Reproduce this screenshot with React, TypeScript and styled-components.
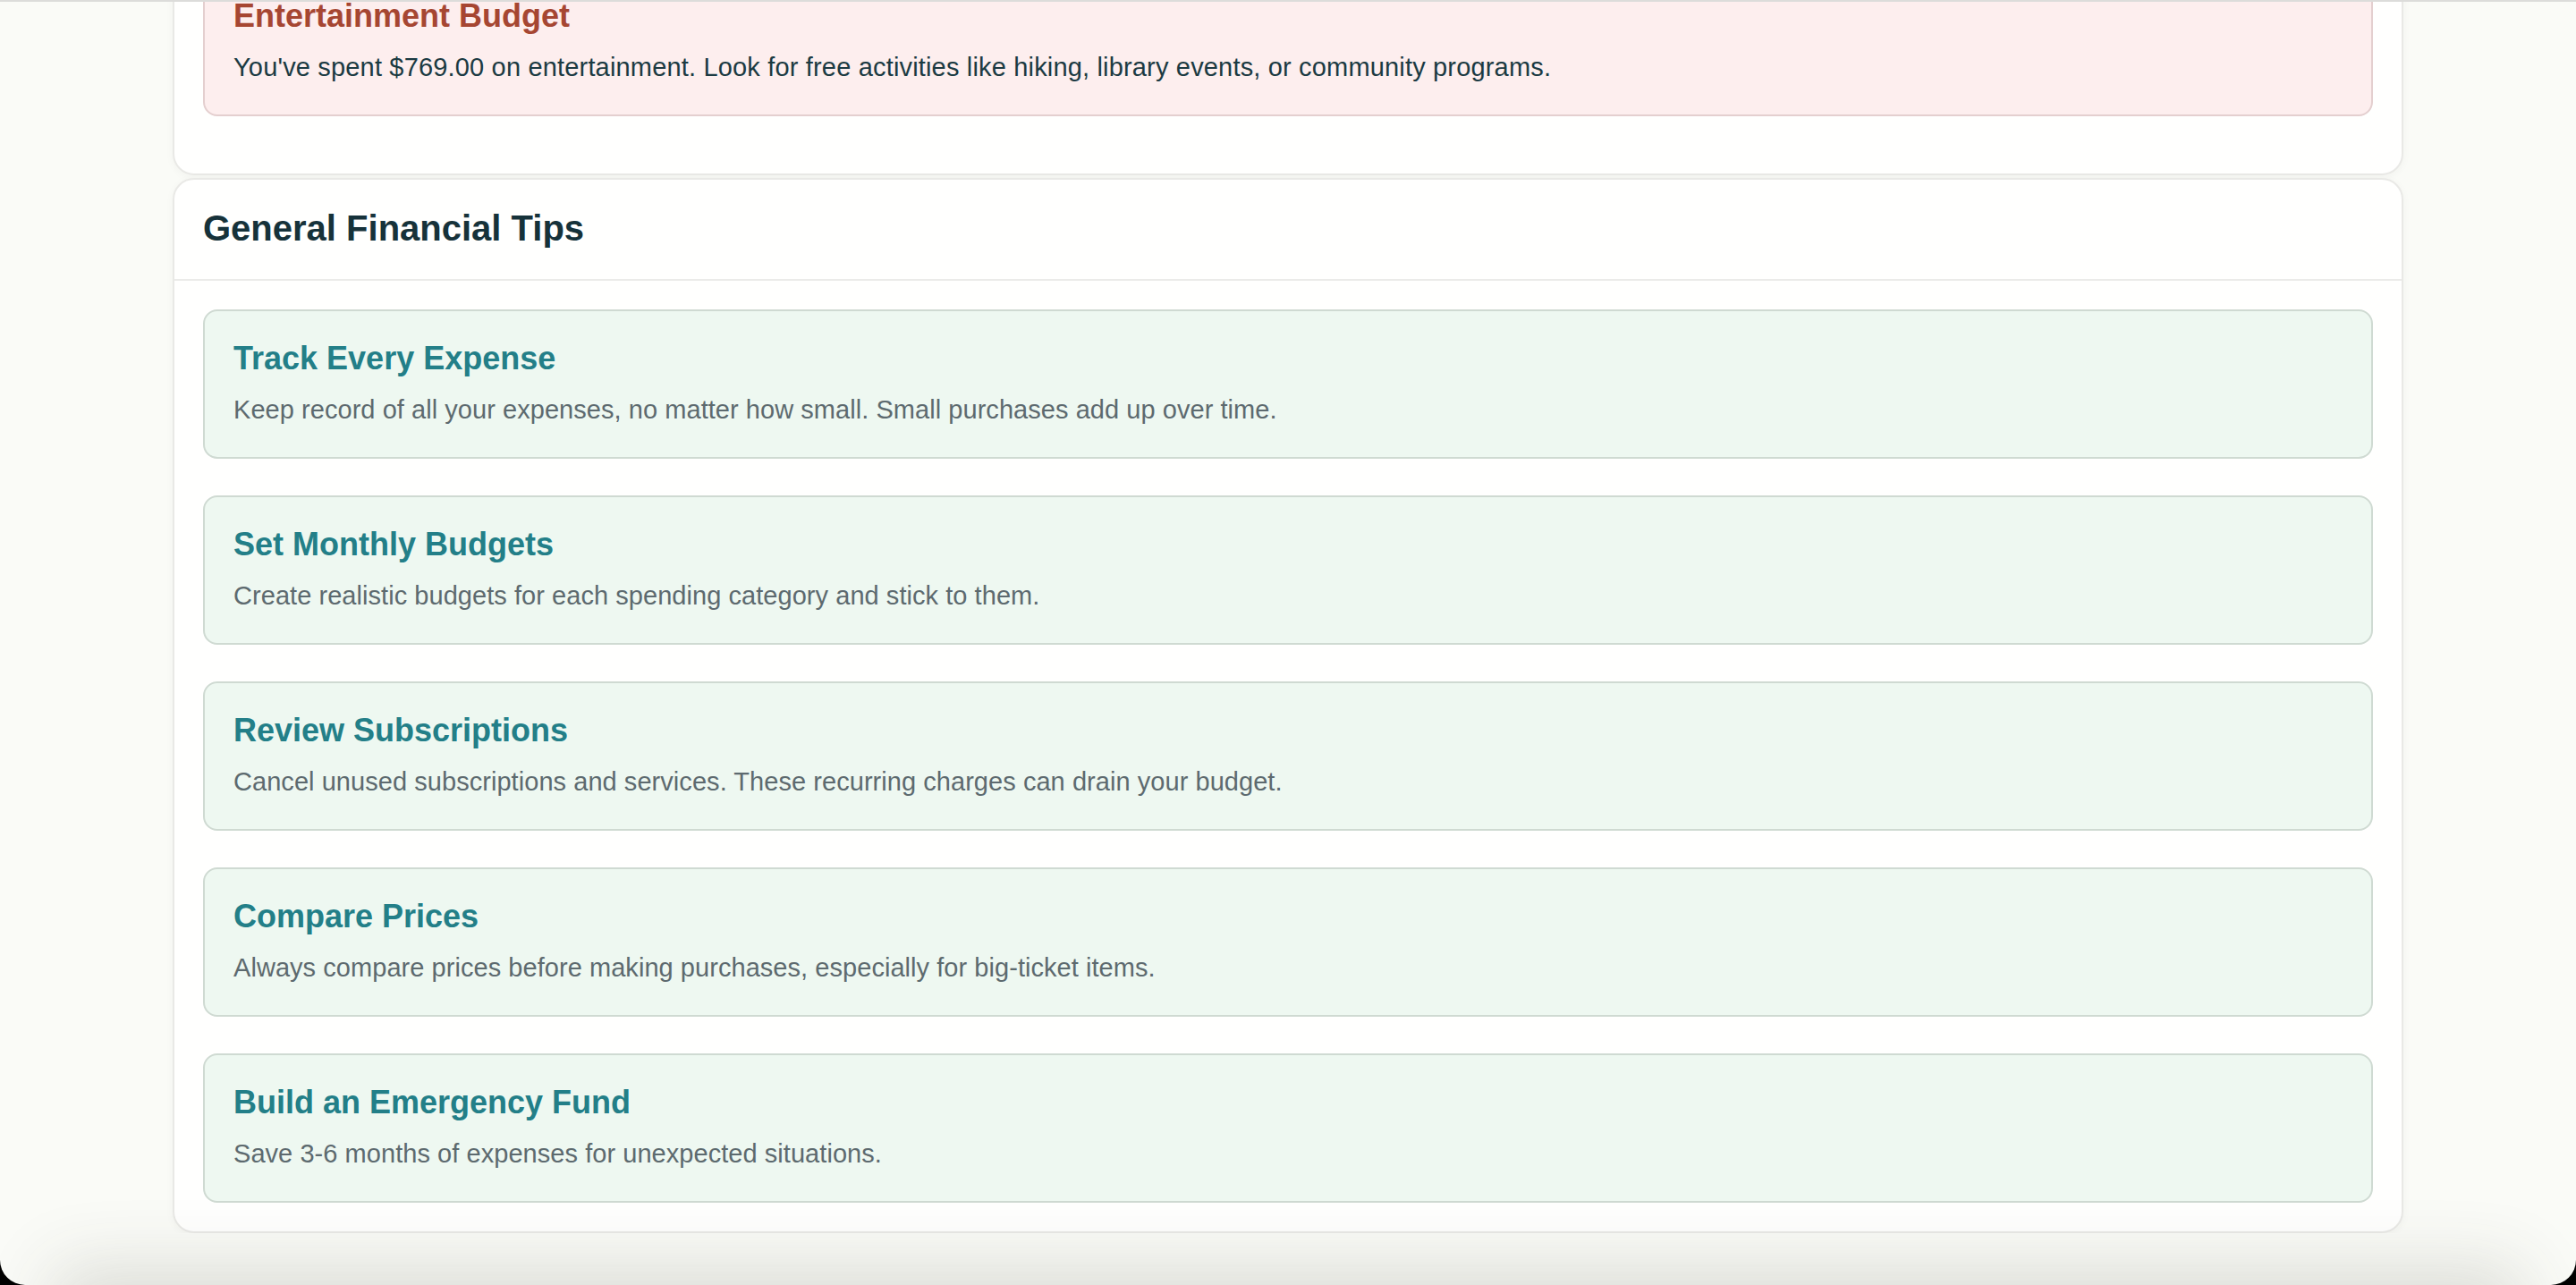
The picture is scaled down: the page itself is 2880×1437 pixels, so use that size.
import styled, { createGlobalStyle } from 'styled-components';

const GlobalStyle = createGlobalStyle`
  * {
    box-sizing: border-box;
  }
  html, body {
    margin: 0;
    padding: 0;
    background-color: #fafbf7;
    font-family: "Liberation Sans", Arial, sans-serif;
    overflow: hidden;
  }
`;

const tips = [
  {
    title: 'Track Every Expense',
    text: 'Keep record of all your expenses, no matter how small. Small purchases add up over time.',
  },
  {
    title: 'Set Monthly Budgets',
    text: 'Create realistic budgets for each spending category and stick to them.',
  },
  {
    title: 'Review Subscriptions',
    text: 'Cancel unused subscriptions and services. These recurring charges can drain your budget.',
  },
  {
    title: 'Compare Prices',
    text: 'Always compare prices before making purchases, especially for big-ticket items.',
  },
  {
    title: 'Build an Emergency Fund',
    text: 'Save 3-6 months of expenses for unexpected situations.',
  },
];

const App = () => {
  return (
    <>
      <GlobalStyle />
      <TopEdge />
      <Page>
        <Card>
          <CardBody>
            <Alert>
              <AlertTitle>Entertainment Budget</AlertTitle>
              <AlertText>
                You've spent $769.00 on entertainment. Look for free activities like hiking, library
                events, or community programs.
              </AlertText>
            </Alert>
          </CardBody>
        </Card>
        <Card>
          <CardHeader>
            <CardTitle>General Financial Tips</CardTitle>
          </CardHeader>
          <CardBody>
            <TipList>
              {tips.map((tip) => (
                <Tip key={tip.title}>
                  <TipTitle>{tip.title}</TipTitle>
                  <TipText>{tip.text}</TipText>
                </Tip>
              ))}
            </TipList>
          </CardBody>
        </Card>
      </Page>
      <BottomShade />
      <WindowFrame />
    </>
  );
};

export default App;

const Page = styled.main`
  max-width: 2494px;
  margin: -71px auto 0;
  display: flex;
  flex-direction: column;
  gap: 3px;
`;

const Card = styled.section`
  background-color: #fffffe;
  border: 2px solid #e9e9e6;
  border-radius: 24px;
  box-shadow: 0 2px 10px rgba(40, 50, 40, 0.04);
`;

const CardHeader = styled.div`
  padding: 30px 32px 33px;
  border-bottom: 2px solid #ebebe9;
`;

const CardTitle = styled.h2`
  margin: 0;
  font-size: 40px;
  line-height: 48px;
  font-weight: 700;
  color: #16323a;
`;

const CardBody = styled.div`
  padding: 32px;
`;

const Alert = styled.div`
  background-color: #fdeeee;
  border: 2px solid #e4cfcf;
  border-radius: 16px;
  padding: 32px;
  margin-bottom: 32px;
`;

const AlertTitle = styled.h3`
  margin: 0 0 15px;
  font-size: 36px;
  line-height: 42px;
  font-weight: 700;
  color: #a64632;
`;

const AlertText = styled.p`
  margin: 0;
  font-size: 29px;
  line-height: 42px;
  letter-spacing: 0.17px;
  color: #1b3a42;
`;

const TipList = styled.div`
  display: flex;
  flex-direction: column;
  gap: 41px;
`;

const Tip = styled.div`
  background-color: #eef8f1;
  border: 2px solid #cfdad2;
  border-radius: 16px;
  padding: 32px;
`;

const TipTitle = styled.h3`
  margin: 0 0 15px;
  font-size: 36px;
  line-height: 42px;
  font-weight: 700;
  color: #237f88;
`;

const TipText = styled.p`
  margin: 0;
  font-size: 29px;
  line-height: 42px;
  letter-spacing: 0.05px;
  color: #5d6a6f;
`;

const TopEdge = styled.div`
  position: fixed;
  top: 0;
  left: 0;
  right: 0;
  height: 2px;
  background-color: #dcdcda;
  z-index: 5;
`;

const BottomShade = styled.div`
  position: fixed;
  left: 80px;
  right: 80px;
  top: 100%;
  height: 120px;
  box-shadow: 0 0 80px 20px rgba(60, 60, 50, 0.16);
  pointer-events: none;
`;

const WindowFrame = styled.div`
  position: fixed;
  inset: 0;
  border-radius: 0 0 28px 28px;
  box-shadow: 0 0 0 40px #000;
  pointer-events: none;
  z-index: 10;
`;
